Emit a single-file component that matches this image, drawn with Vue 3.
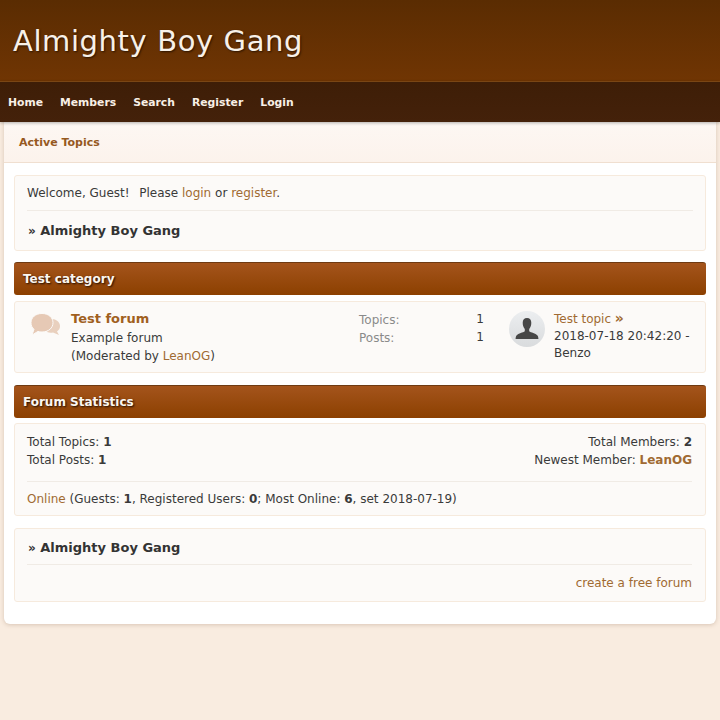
<template>
  <div class="page">
    <header class="site-header">
      <h1 class="site-title">Almighty Boy Gang</h1>
    </header>
    <nav class="main-nav">
      <a v-for="item in navItems" :key="item" class="nav-link">{{ item }}</a>
    </nav>

    <main class="content">
      <div class="tab-bar">
        <a class="tab-link">Active Topics</a>
      </div>

      <div class="body-area">
        <section class="panel welcome">
          <p class="welcome-line">
            Welcome, Guest!<span class="greet-gap">&nbsp;</span> Please <a class="link">login</a> or <a class="link">register</a>.
          </p>
          <h2 class="crumb"><span class="crumb-mark">»</span> Almighty Boy Gang</h2>
        </section>

        <h3 class="cat-bar">Test category</h3>
        <section class="panel forum-row">
          <svg class="forum-icon" width="32" height="26" viewBox="0 0 32 26">
            <path d="M19 7h3c4 0 8 3 8 7 0 2.500-1 4-3 5.500l2 3.500-6-2.500c-2 .5-4 .3-6-.5z" fill="#e9d0be" />
            <path d="M12 1.500c6.500 0 11 4 11 9.200s-4.500 9.300-11 9.300c-1.500 0-3-.2-4-.6l-6 3.600 2-5.700c-2-1.600-3-3.900-3-6.600C1 5.500 5.500 1.500 12 1.500z" fill="#e6c9b5" stroke="#fcfaf8" stroke-width="1" />
          </svg>
          <div class="forum-info">
            <a class="forum-name">Test forum</a>
            <div>Example forum</div>
            <div>(Moderated by <a class="link">LeanOG</a>)</div>
          </div>
          <div class="forum-stats">
            <div class="stat-row"><span class="stat-label">Topics:</span><span class="stat-value">1</span></div>
            <div class="stat-row"><span class="stat-label">Posts:</span><span class="stat-value">1</span></div>
          </div>
          <div class="avatar">
            <svg width="36" height="36" viewBox="0 0 36 36">
              <defs>
                <linearGradient id="avatar-bg" x1="0" y1="0" x2="0" y2="1">
                  <stop offset="0" stop-color="#eceef0" />
                  <stop offset="1" stop-color="#d9dbdd" />
                </linearGradient>
              </defs>
              <circle cx="18" cy="18" r="18" fill="url(#avatar-bg)" />
              <path d="M18 7c-2.800 0-4.300 1.800-4.300 4.800 0 2.700.8 4.800 2.100 6.200v2.200c-1.700 1.500-6.300 1.700-8.300 4.300-.7.900-.9 2.300-.9 3.500h22.800c0-1.200-.2-2.600-.9-3.500-2-2.600-6.600-2.800-8.300-4.300V18c1.300-1.400 2.100-3.500 2.100-6.200C22.300 8.800 20.800 7 18 7z" fill="#474747" />
            </svg>
          </div>
          <div class="last-post">
            <a class="link">Test topic <b class="arrow">»</b></a>
            <div>2018-07-18 20:42:20 - Benzo</div>
          </div>
        </section>

        <h3 class="cat-bar">Forum Statistics</h3>
        <section class="panel stats">
          <div class="stats-cols">
            <div>
              <div>Total Topics: <b>1</b></div>
              <div>Total Posts: <b>1</b></div>
            </div>
            <div class="stats-right">
              <div>Total Members: <b>2</b></div>
              <div>Newest Member: <a class="link"><b>LeanOG</b></a></div>
            </div>
          </div>
          <p class="online">
            <a class="link">Online</a> (Guests: <b>1</b>, Registered Users: <b>0</b>; Most Online: <b>6</b>, set 2018-07-19)
          </p>
        </section>

        <section class="panel footer-panel">
          <h2 class="crumb footer-crumb"><span class="crumb-mark">»</span> Almighty Boy Gang</h2>
          <div class="credit"><a class="link">create a free forum</a></div>
        </section>
      </div>
    </main>
  </div>
</template>

<script setup>
const navItems = ["Home", "Members", "Search", "Register", "Login"];
</script>

<style>
html,
body {
  background: #f9ece0;
}
</style>

<style scoped>
.page {
  height: 720px;
  overflow: hidden;
  font-family: "DejaVu Sans", sans-serif;
  font-size: 12px;
  color: #3a3a3a;
  background: #f9ece0;
}

.site-header {
  height: 81px;
  box-sizing: border-box;
  padding: 23px 13px 0;
  background: linear-gradient(#5a2c02, #703503);
}

.site-title {
  margin: 0;
  font-size: 29px;
  font-weight: 400;
  line-height: 36px;
  letter-spacing: 0.6px;
  color: #f8f1e8;
  text-shadow: 1px 1px 2px #2b1400;
}

.main-nav {
  display: flex;
  gap: 17px;
  height: 41px;
  box-sizing: border-box;
  padding: 0 8px;
  align-items: center;
  background: linear-gradient(#3e1e07, #44210a);
  border-top: 1px solid #7a4614;
  box-shadow: 0 1px 3px rgba(0, 0, 0, 0.3);
  position: relative;
  z-index: 1;
}

.nav-link {
  font-size: 10.800px;
  font-weight: 700;
  color: #f8efe6;
}

.content {
  margin: 0 4px;
  height: 502px;
  background: #fff;
  border-radius: 0 0 6px 6px;
  box-shadow: 0 1px 4px rgba(120, 80, 50, 0.25);
}

.tab-bar {
  height: 41px;
  box-sizing: border-box;
  padding: 13px 15px 0;
  background: linear-gradient(#fdf7f3, #fcf3ec);
  border-bottom: 1px solid #f0dfd0;
}

.tab-link {
  font-size: 11px;
  font-weight: 700;
  color: #96591f;
}

.body-area {
  padding: 12px 10px 0;
}

.panel {
  background: #fcfaf8;
  border: 1px solid #f6eadd;
  border-radius: 3px;
  padding: 0 12px;
}

.welcome {
  height: 76px;
  box-sizing: border-box;
  padding-top: 10px;
}

.welcome-line {
  margin: 0;
  padding-bottom: 10px;
  border-bottom: 1px solid #f0ebe5;
  line-height: 14px;
}

.greet-gap {
  margin-left: 3.800px;
  margin-right: -1.800px;
}

.link {
  color: #a06a32;
}

.crumb {
  margin: 12px 0 0;
  padding-left: 1px;
  font-size: 13px;
  line-height: 16px;
  font-weight: 700;
  color: #333;
}

.crumb-mark {
  font-size: 12px;
}

.cat-bar {
  margin: 11px 0 5px;
  height: 33px;
  box-sizing: border-box;
  padding: 9px 9px 0;
  font-size: 12px;
  line-height: 15px;
  font-weight: 700;
  color: #fbf6f0;
  text-shadow: 1px 1px 2px #1e0c00;
  border-top: 1px solid #6e3a12;
  border-radius: 3px;
  background: linear-gradient(#a4541c, #8c4000);
}

.forum-row {
  display: flex;
  height: 72px;
  margin-top: 6px;
  margin-bottom: 12px;
  box-sizing: border-box;
  padding: 0;
  line-height: 18px;
}

.forum-icon {
  flex: none;
  margin: 10px 9px 0 15px;
}

.forum-info {
  width: 288px;
  padding-top: 8px;
}

.forum-name {
  display: block;
  height: 19px;
  font-size: 13px;
  font-weight: 700;
  color: #a0601e;
}

.forum-stats {
  width: 125px;
  padding-top: 9px;
}

.stat-row {
  display: flex;
  justify-content: space-between;
}

.stat-label {
  color: #8a8a8a;
}

.stat-value {
  margin-top: -1px;
}

.avatar {
  flex: none;
  margin: 9px 9px 0 25px;
  height: 36px;
}

.last-post {
  width: 144px;
  padding-top: 8px;
  line-height: 17px;
}

.arrow {
  font-size: 14px;
}

.stats {
  height: 93px;
  box-sizing: border-box;
  padding: 9px 13px 0 12px;
  line-height: 18px;
}

.stats-cols {
  display: flex;
  justify-content: space-between;
  padding-bottom: 12px;
  border-bottom: 1px solid #f0ebe5;
}

.stats-right {
  text-align: right;
}

.online {
  margin: 8px 0 0;
}

.footer-panel {
  margin-top: 12px;
  height: 74px;
  box-sizing: border-box;
  padding: 0 13px 0 12px;
}

.footer-crumb {
  margin: 0;
  padding-top: 11px;
  padding-bottom: 8px;
  border-bottom: 1px solid #f0ebe5;
}

.credit {
  margin-top: 11px;
  text-align: right;
  line-height: 15px;
}
</style>
